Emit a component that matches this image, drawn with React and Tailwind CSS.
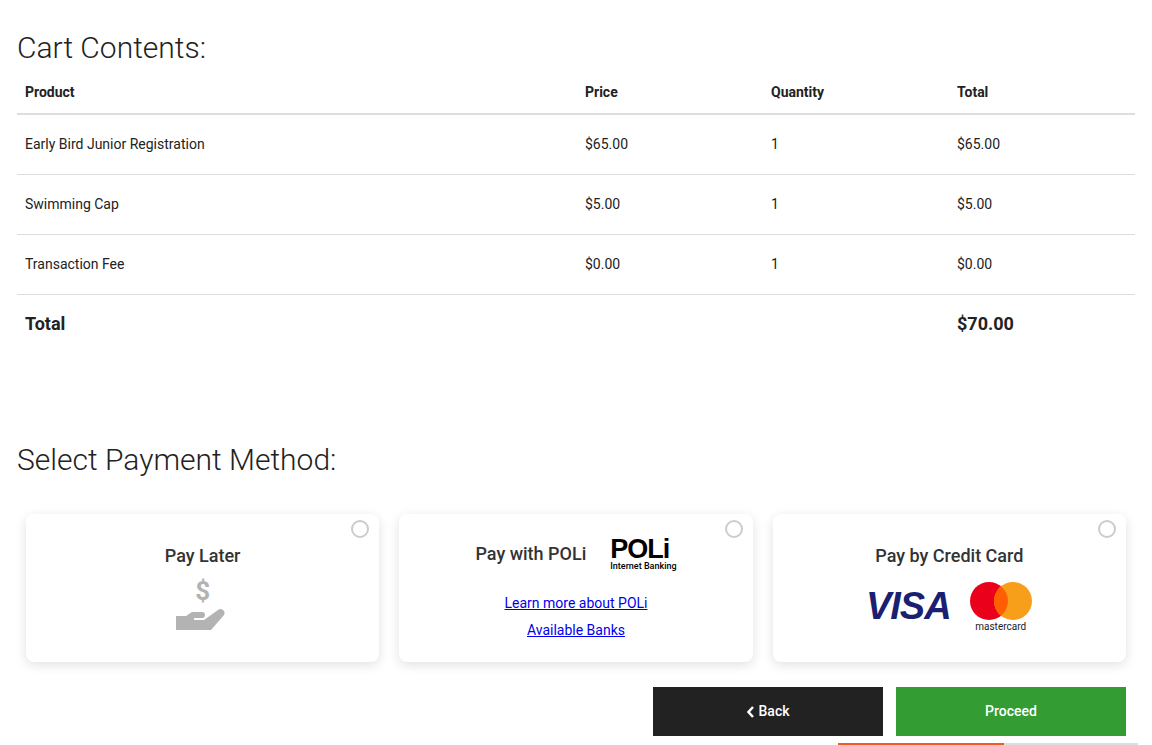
import React from "react";

const rows = [
  ["Early Bird Junior Registration", "$65.00", "1", "$65.00"],
  ["Swimming Cap", "$5.00", "1", "$5.00"],
  ["Transaction Fee", "$0.00", "1", "$0.00"],
];

function Card({ children }) {
  return (
    <div className="relative bg-white rounded-lg shadow-[0_3px_12px_rgba(0,0,0,0.12)] h-[148px] flex flex-col items-center pt-[30px]">
      <div className="absolute right-[10px] top-[6px] w-[18px] h-[18px] rounded-full border-2 border-[#ccc] bg-white" />
      {children}
    </div>
  );
}

export default function App() {
  return (
    <div className="bg-white w-[1152px] h-[745px] overflow-hidden relative text-[#222]" style={{ fontFamily: "Roboto, 'Liberation Sans', sans-serif" }}>
      <div className="px-[17px] pt-[30px] w-[1152px]">
        <h1 className="text-[30px] font-light leading-[36px] text-[#222]">Cart Contents:</h1>
        <div className="mt-[13px] w-[1118px]">
          <div className="grid grid-cols-[560px_186px_186px_1fr] px-[8px] h-[36px] items-start text-[14px] font-bold pt-[3px] border-b-2 border-[#ddd]">
            <div>Product</div><div>Price</div><div>Quantity</div><div>Total</div>
          </div>
          {rows.map((r) => (
            <div key={r[0]} className="grid grid-cols-[560px_186px_186px_1fr] px-[8px] h-[60px] items-center text-[14px] border-b border-[#ddd]">
              {r.map((c, i) => <div key={i}>{c}</div>)}
            </div>
          ))}
          <div className="grid grid-cols-[560px_186px_186px_1fr] px-[8px] h-[56px] items-center text-[18px] font-bold">
            <div>Total</div><div /><div /><div>$70.00</div>
          </div>
        </div>
        <h2 className="mt-[91px] text-[30px] font-light leading-[36px]">Select Payment Method:</h2>
        <div className="mt-[36px] ml-[9px] w-[1100px] grid grid-cols-3 gap-[20px]">
          <Card>
            <div className="text-[18px] font-medium text-[#333] leading-[24px]">Pay Later</div>
            <div className="mt-[10px] flex flex-col items-center">
              <span className="text-[26px] font-bold text-[#b3b3b3] leading-[26px]">$</span>
              <svg width="60" height="28" viewBox="0 0 60 28" fill="#b3b3b3">
                <path d="M3 12h10l6-4h10a3 3 0 0 1 0 6h-8v2h10l14-10a4 4 0 0 1 6 5L38 26H3z" />
              </svg>
            </div>
          </Card>
          <Card>
            <div className="flex items-center gap-[24px] -mt-[8px]">
              <div className="text-[18px] font-medium text-[#333]">Pay with POLi</div>
              <div className="flex flex-col items-start leading-none">
                <span className="text-[27px] font-black tracking-[-1px] text-black leading-[26px]" style={{ fontFamily: "'Liberation Sans', sans-serif" }}>POLi</span>
                <span className="text-[9px] font-medium text-black">Internet Banking</span>
              </div>
            </div>
            <a className="mt-[22px] text-[14px] text-[#0000ee] underline">Learn more about POLi</a>
            <a className="mt-[6px] text-[14px] text-[#0000ee] underline">Available Banks</a>
          </Card>
          <Card>
            <div className="text-[18px] font-medium text-[#333] leading-[24px]">Pay by Credit Card</div>
            <div className="mt-[10px] flex items-center gap-[18px]">
              <span className="text-[38px] font-black italic text-[#1a1f71] tracking-[-1px]" style={{ fontFamily: "'Liberation Sans', sans-serif" }}>VISA</span>
              <div className="flex flex-col items-center">
                <svg width="64" height="40" viewBox="0 0 64 40">
                  <circle cx="20" cy="20" r="19" fill="#eb001b" />
                  <circle cx="44" cy="20" r="19" fill="#f79e1b" />
                  <path d="M32 5.3a19 19 0 0 1 0 29.4a19 19 0 0 1 0-29.4z" fill="#ff5f00" />
                </svg>
                <span className="text-[10px] text-[#222] leading-none mt-[1px]">mastercard</span>
              </div>
            </div>
          </Card>
        </div>
        <div className="mt-[25px] flex justify-end gap-[13px] w-[1109px]">
          <button className="w-[230px] h-[49px] bg-[#222] text-white text-[14px] font-medium flex items-center justify-center gap-[4px]">
            <svg width="8" height="12" viewBox="0 0 8 12"><path d="M6 1 1.5 6 6 11" stroke="white" strokeWidth="2.5" fill="none" /></svg>
            Back
          </button>
          <button className="w-[230px] h-[49px] bg-[#339c33] text-white text-[14px] font-medium">Proceed</button>
        </div>
      </div>
      <div className="absolute left-[838px] top-[743px] flex">
        <div className="w-[166px] h-[2px] bg-[#f05a28]" />
        <div className="w-[134px] h-[2px] bg-[#ddd]" />
      </div>
    </div>
  );
}
